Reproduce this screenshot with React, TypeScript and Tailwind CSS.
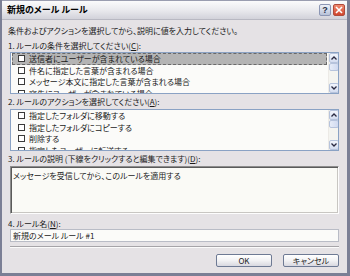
import React from "react";

const FONT = '"Noto Sans CJK JP", "Noto Sans", sans-serif';

function Checkbox() {
  return <span className="inline-block w-[7px] h-[7px] border border-[#3a3a3a] bg-white shrink-0" />;
}

function Scrollbar() {
  return (
    <div className="w-[10px] h-full flex flex-col bg-[#f4f4f0] border-l border-[#eceae6]">
      <div className="w-[10px] h-[10px] rounded-[2px] border border-[#b6c3dc] bg-gradient-to-b from-[#f2f5fc] to-[#d4ddf0] flex items-center justify-center">
        <svg width="6" height="4" viewBox="0 0 6 4"><path d="M0.5 3.5 L3 1 L5.5 3.5" stroke="#2a2a40" strokeWidth="1.3" fill="none" /></svg>
      </div>
      <div className="w-[10px] h-[8px] rounded-[2px] border border-[#b6c3dc] bg-gradient-to-r from-[#e6ecf8] to-[#d0daf0]" />
      <div className="flex-1" />
      <div className="w-[10px] h-[10px] rounded-[2px] border border-[#b6c3dc] bg-gradient-to-b from-[#f2f5fc] to-[#d4ddf0] flex items-center justify-center">
        <svg width="6" height="4" viewBox="0 0 6 4"><path d="M0.5 0.5 L3 3 L5.5 0.5" stroke="#2a2a40" strokeWidth="1.3" fill="none" /></svg>
      </div>
    </div>
  );
}

function ListBox({ items, selected }: { items: string[]; selected: boolean }) {
  return (
    <div className="ml-[2px] w-[329px] h-[42px] border border-[#8aa2c4] bg-[#fbfbf9] flex overflow-hidden">
      <div className="flex-1 pl-[1px] pr-[1px] overflow-hidden">
        {items.map((t, i) => (
          <div
            key={i}
            className={
              "h-[11.5px] flex items-center pl-[5px] gap-[4px] " +
              (selected && i === 0 ? "bg-[#b4b4b4] border border-dashed border-[#6a6a6a]" : "border border-transparent")
            }
          >
            <Checkbox />
            <span className="leading-[11px] whitespace-nowrap">{t}</span>
          </div>
        ))}
      </div>
      <Scrollbar />
    </div>
  );
}

function Label({ text, acc, className = "" }: { text: string; acc: string; className?: string }) {
  return (
    <div className={"leading-[11px] h-[11px] whitespace-nowrap " + className}>
      {text}(<span className="underline">{acc}</span>):
    </div>
  );
}

export default function App() {
  return (
    <div
      className="w-[350px] h-[276px] bg-[#e5e2e5] border-l-2 border-r-[3px] border-b-[3px] border-[#7b7f95] flex flex-col text-[8px] text-[#1a1a1a] [font-feature-settings:'palt'] overflow-hidden"
      style={{ fontFamily: FONT }}
    >
      {/* title bar */}
      <div className="h-[20px] border-t border-[#9a9db0] bg-gradient-to-b from-[#fbfbfc] via-[#eaeaee] to-[#d2d2da] border-b border-b-[#b8b8c2] flex items-center pl-[5px] pr-[2px]">
        <span className="font-bold text-[9px] text-black">新規のメール ルール</span>
        <div className="flex-1" />
        <div className="w-[12px] h-[12px] rounded-[2px] border border-[#8c96b4] bg-gradient-to-b from-[#eef1f8] to-[#b8c2d8] flex items-center justify-center text-[9px] leading-none text-[#2a3048] font-bold mr-[2px]" style={{ fontFamily: '"Liberation Sans", sans-serif' }}>?</div>
        <div className="w-[12px] h-[12px] rounded-[2px] border border-[#b04a3a] bg-gradient-to-b from-[#f08a70] to-[#d0442c] flex items-center justify-center">
          <svg width="8" height="8" viewBox="0 0 8 8"><path d="M1 1 L7 7 M7 1 L1 7" stroke="white" strokeWidth="1.6" /></svg>
        </div>
      </div>

      {/* body */}
      <div className="pl-[6px] flex flex-col">
        <div className="mt-[5px] leading-[11px] h-[11px] whitespace-nowrap">条件およびアクションを選択してから、説明に値を入力してください。</div>
        <Label className="mt-[4px]" text="1. ルールの条件を選択してください" acc="C" />
        <div className="mt-[1px]">
          <ListBox selected items={["送信者にユーザーが含まれている場合", "件名に指定した言葉が含まれる場合", "メッセージ本文に指定した言葉が含まれる場合", "宛先にユーザーが含まれている場合"]} />
        </div>
        <Label className="mt-[2px]" text="2. ルールのアクションを選択してください" acc="A" />
        <div className="mt-[2px]">
          <ListBox selected={false} items={["指定したフォルダに移動する", "指定したフォルダにコピーする", "削除する", "指定したユーザーに転送する"]} />
        </div>
        <Label className="mt-[2px]" text="3. ルールの説明 (下線をクリックすると編集できます)" acc="D" />
        <div className="mt-[2px] ml-[2px] w-[329px] h-[48px] bg-[#fafaf6] border border-t-[#8c8c8c] border-l-[#8c8c8c] border-b-[#fdfdfd] border-r-[#fdfdfd] shadow-[inset_1px_1px_0_#5a5a5a,inset_-1px_-1px_0_#c8c6c2] pl-[2px] pt-[3px] leading-[11px] whitespace-nowrap">
          メッセージを受信してから、このルールを適用する
        </div>
        <Label className="mt-[4px]" text="4. ルール名" acc="N" />
        <div className="ml-[2px] w-[329px] h-[13px] bg-[#fbfbf9] border border-[#b9bcc6] pl-[2px] leading-[11px] whitespace-nowrap flex items-center">
          新規のメール ルール #1
        </div>
        <div className="mt-[4px] ml-[2px] w-[329px] h-[2px] border-t border-[#a6a4a8] border-b border-b-[#fbfbfb]" />
        <div className="mt-[6px] ml-[208px] flex gap-[11px]">
          <div className="w-[56px] h-[13px] rounded-[2px] border border-[#6e7a94] bg-gradient-to-b from-[#ffffff] via-[#f2f2f4] to-[#d8d8e0] flex items-center justify-center leading-none">OK</div>
          <div className="w-[56px] h-[13px] rounded-[2px] border border-[#6e7a94] bg-gradient-to-b from-[#ffffff] via-[#f2f2f4] to-[#d8d8e0] flex items-center justify-center leading-none">キャンセル</div>
        </div>
      </div>
    </div>
  );
}
